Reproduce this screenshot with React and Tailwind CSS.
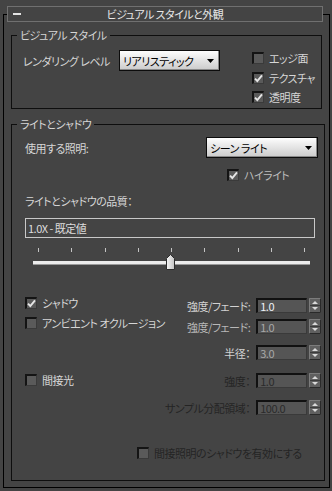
import React from "react";

const Box = ({ checked }) => (
  <div className="w-[12px] h-[12px] shrink-0 border-t-2 border-l-2 border-r border-b border-t-[#141414] border-l-[#141414] border-r-[#3a3a3a] border-b-[#3a3a3a] bg-[#5a5a5a] flex items-center justify-center">
    {checked && (
      <svg width="9" height="9" viewBox="0 0 9 9">
        <path d="M1 4.6 L3.3 7 L8 1.4" fill="none" stroke="#e6e6e6" strokeWidth="1.9" />
      </svg>
    )}
  </div>
);

const Check = ({ checked, label, labelCls = "" }) => (
  <div className="flex items-center gap-[5px] h-[12px]">
    <Box checked={checked} />
    <span className={labelCls}>{label}</span>
  </div>
);

const Select = ({ label, w }) => (
  <div
    className={`${w} shrink-0 h-[21px] border border-[#0c0c0c] bg-linear-to-b from-[#fdfdfd] to-[#cbcbcb] shadow-[inset_-1px_-1px_0_#8a8a8a] flex items-center pl-[3px] pr-[5px] text-black`}
  >
    <span className="flex-1">{label}</span>
    <svg width="7" height="4" viewBox="0 0 7 4">
      <path d="M0 0H7L3.5 4Z" fill="#000" />
    </svg>
  </div>
);

const Spinner = () => (
  <svg width="12" height="15" viewBox="0 0 12 15">
    <rect x="0" y="0" width="12" height="15" fill="#606060" />
    <path d="M0.5 14.5V0.5H11.5" stroke="#7c7c7c" fill="none" />
    <path d="M11.5 0.5V14.5H0.5" stroke="#2a2a2a" fill="none" />
    <line x1="1" y1="7.5" x2="11" y2="7.5" stroke="#3c3c3c" />
    <path d="M3 6H9L6 3Z" fill="#dadada" />
    <path d="M3 9H9L6 12Z" fill="#dadada" />
  </svg>
);

const SpinRow = ({ label, value, labelCls, valCls, className = "" }) => (
  <div className={`flex items-center justify-end h-[15px] ${className}`}>
    <span className={labelCls}>{label}</span>
    <div
      className={`ml-[6px] w-[51px] h-[15px] shrink-0 border-t-2 border-l-2 border-r border-b border-t-[#111] border-l-[#111] border-r-[#3a3a3a] border-b-[#3a3a3a] bg-[#555555] pl-[2px] leading-[12px] ${valCls}`}
    >
      {value}
    </div>
    <div className="ml-[2px] shrink-0">
      <Spinner />
    </div>
  </div>
);

export default function App() {
  return (
    <div className="w-[332px] h-[491px] bg-[#444444] overflow-hidden whitespace-nowrap font-['Noto_Sans_CJK_JP',sans-serif] text-[11px] tracking-[-0.5px] leading-[14px] text-[#d6d6d6] [font-feature-settings:'palt']">
      <div className="pt-[14px] pl-[3px]">
        <div className="w-[327px] h-[474px] border border-black">
          {/* rollout header */}
          <div className="-mt-[9px] ml-[3px] w-[316px] h-[16px] border border-[#707070] bg-[#444444] flex items-center">
            <div className="ml-[5px] w-[8px] h-[2px] bg-[#e4e4e4]" />
            <div className="flex-1 mr-[13px] text-center text-[#e8e8e8]">
              ビジュアル スタイルと外観
            </div>
          </div>

          {/* visual style */}
          <fieldset className="mt-[6px] ml-[7px] w-[311px] border border-[#0e0e0e]">
            <legend className="ml-[5px] px-[3px] leading-[14px]">ビジュアル スタイル</legend>
            <div className="flex pt-[8px] pb-[5px]">
              <div className="flex items-center h-[21px] pl-[11px] shrink-0">
                <span className="w-[96px]">レンダリング レベル</span>
                <Select w="w-[101px]" label="リアリスティック" />
              </div>
              <div className="ml-[32px] mt-[2px] flex flex-col shrink-0">
                <Check label="エッジ面" />
                <div className="mt-[8px]">
                  <Check checked label="テクスチャ" />
                </div>
                <div className="mt-[7px]">
                  <Check checked label="透明度" />
                </div>
              </div>
            </div>
          </fieldset>

          {/* light and shadow */}
          <fieldset className="mt-[8px] ml-[7px] w-[311px] border border-[#0e0e0e]">
            <legend className="ml-[5px] px-[3px] leading-[14px]">ライトとシャドウ</legend>
            <div className="pt-[6px] pb-[21px]">
              <div className="flex items-center justify-between h-[21px] pl-[13px] pr-[6px]">
                <span>使用する照明:</span>
                <Select w="w-[112px]" label="シーン ライト" />
              </div>
              <div className="mt-[11px] pl-[215px]">
                <Check checked label="ハイライト" labelCls="text-[#bdbdbd]" />
              </div>
              <div className="mt-[13px] pl-[13px] h-[14px]">ライトとシャドウの品質：</div>
              <div className="mt-[10px] ml-[13px] w-[290px] h-[20px] border border-[#c8c8c8] flex items-center pl-[2px] text-[#dcdcdc]">
                1.0X - 既定値
              </div>

              {/* slider */}
              <div className="mt-[10px] ml-[21px] w-[277px] h-[23px] relative">
                <div className="flex justify-between px-[5px] h-[4px]">
                  {[0, 1, 2, 3, 4, 5, 6, 7, 8].map((i) => (
                    <div key={i} className="w-px h-[4px] bg-[#c4c4c4]" />
                  ))}
                </div>
                <div className="mt-[9px] h-[4px] bg-[#ececec] border-b border-[#9a9a9a]" />
                <div className="absolute left-[133px] top-[6px]">
                  <svg width="9" height="16" viewBox="0 0 9 16">
                    <defs>
                      <linearGradient id="thumb" x1="0" x2="1" y1="0" y2="0">
                        <stop offset="0" stopColor="#f6f6f6" />
                        <stop offset="1" stopColor="#c2c2c2" />
                      </linearGradient>
                    </defs>
                    <path d="M0.5 4.5L4.5 0.5L8.5 4.5V15.5H0.5Z" fill="url(#thumb)" stroke="#2c2c2c" />
                  </svg>
                </div>
              </div>

              {/* shadows */}
              <div className="mt-[26px] flex">
                <div className="pl-[13px] flex flex-col shrink-0">
                  <Check checked label="シャドウ" />
                  <div className="mt-[8px]">
                    <Check label="アンビエント オクルージョン" />
                  </div>
                  <div className="mt-[45px]">
                    <Check label="間接光" />
                  </div>
                </div>
                <div className="ml-auto shrink-0 pr-[3px] mt-[1px] flex flex-col">
                  <SpinRow label="強度/フェード:" value="1.0" labelCls="text-[#d2d2d2]" valCls="text-[#eef2f8]" />
                  <SpinRow className="mt-[6px]" label="強度/フェード:" value="1.0" labelCls="text-[#b8b8b8]" valCls="text-[#a8a8a8]" />
                  <SpinRow className="mt-[11px]" label="半径：" value="3.0" labelCls="text-[#d2d2d2]" valCls="text-[#a8a8a8]" />
                  <SpinRow className="mt-[13px]" label="強度：" value="1.0" labelCls="text-[#242424]" valCls="text-[#2a2a2a]" />
                  <SpinRow className="mt-[12px]" label="サンプル分配領域：" value="100.0" labelCls="text-[#242424]" valCls="text-[#2a2a2a]" />
                </div>
              </div>

              <div className="mt-[32px] pl-[125px]">
                <Check label="間接照明のシャドウを有効にする" labelCls="text-[#242424]" />
              </div>
            </div>
          </fieldset>
        </div>
      </div>
    </div>
  );
}
